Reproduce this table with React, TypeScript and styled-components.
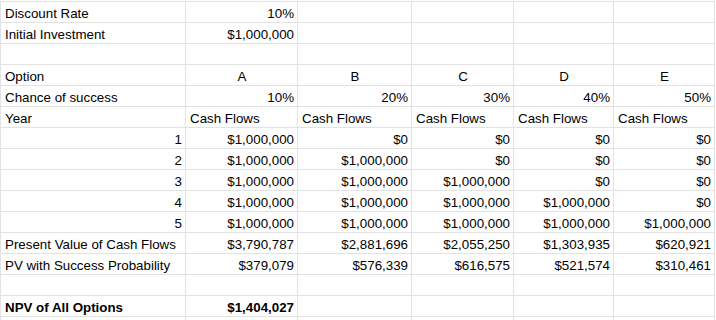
import { FunctionComponent } from "react";
import styled, { createGlobalStyle } from "styled-components";

type Align = "left" | "center" | "right";

interface CellData {
  text?: string;
  align?: Align;
}

interface RowData {
  cells: CellData[];
  bold?: boolean;
}

const GlobalStyle = createGlobalStyle`
  html, body {
    margin: 0;
    padding: 0;
    background: #ffffff;
    overflow: hidden;
  }
  body {
    font-family: "Liberation Sans", Arial, sans-serif;
    color: #000000;
  }
`;

const Sheet = styled.div`
  margin-top: 1px;
  display: grid;
  grid-template-columns: 185px 112px 114px 102px 100px 101px;
  grid-auto-rows: 21px;
  width: 715px;
  border-left: 1px solid #e2e2e2;
  border-top: 1px solid #e2e2e2;
  box-sizing: border-box;
`;

const Cell = styled.div<{ $align: Align; $bold?: boolean }>`
  box-sizing: border-box;
  border-right: 1px solid #e2e2e2;
  border-bottom: 1px solid #e2e2e2;
  display: flex;
  align-items: flex-end;
  justify-content: ${(p) =>
    p.$align === "right" ? "flex-end" : p.$align === "center" ? "center" : "flex-start"};
  padding: 0 3px 0 4px;
  font-size: 13.33px;
  line-height: 17px;
  font-weight: ${(p) => (p.$bold ? 700 : 400)};
  white-space: nowrap;
  overflow: hidden;
`;

const L = (text: string): CellData => ({ text, align: "left" });
const R = (text: string): CellData => ({ text, align: "right" });
const C = (text: string): CellData => ({ text, align: "center" });
const E: CellData = {};

const M = "$1,000,000";
const Z = "$0";
const CF = L("Cash Flows");

const rows: RowData[] = [
  { cells: [L("Discount Rate"), R("10%"), E, E, E, E] },
  { cells: [L("Initial Investment"), R(M), E, E, E, E] },
  { cells: [E, E, E, E, E, E] },
  { cells: [L("Option"), C("A"), C("B"), C("C"), C("D"), C("E")] },
  { cells: [L("Chance of success"), R("10%"), R("20%"), R("30%"), R("40%"), R("50%")] },
  { cells: [L("Year"), CF, CF, CF, CF, CF] },
  { cells: [R("1"), R(M), R(Z), R(Z), R(Z), R(Z)] },
  { cells: [R("2"), R(M), R(M), R(Z), R(Z), R(Z)] },
  { cells: [R("3"), R(M), R(M), R(M), R(Z), R(Z)] },
  { cells: [R("4"), R(M), R(M), R(M), R(M), R(Z)] },
  { cells: [R("5"), R(M), R(M), R(M), R(M), R(M)] },
  {
    cells: [
      L("Present Value of Cash Flows"),
      R("$3,790,787"),
      R("$2,881,696"),
      R("$2,055,250"),
      R("$1,303,935"),
      R("$620,921"),
    ],
  },
  {
    cells: [
      L("PV with Success Probability"),
      R("$379,079"),
      R("$576,339"),
      R("$616,575"),
      R("$521,574"),
      R("$310,461"),
    ],
  },
  { cells: [E, E, E, E, E, E] },
  { cells: [L("NPV of All Options"), R("$1,404,027"), E, E, E, E], bold: true },
  { cells: [E, E, E, E, E, E] },
];

const App: FunctionComponent = () => {
  return (
    <>
      <GlobalStyle />
      <Sheet>
        {rows.map((row, r) =>
          row.cells.map((cell, c) => (
            <Cell key={`${r}-${c}`} $align={cell.align || "left"} $bold={row.bold}>
              {cell.text}
            </Cell>
          ))
        )}
      </Sheet>
    </>
  );
};

export default App;
